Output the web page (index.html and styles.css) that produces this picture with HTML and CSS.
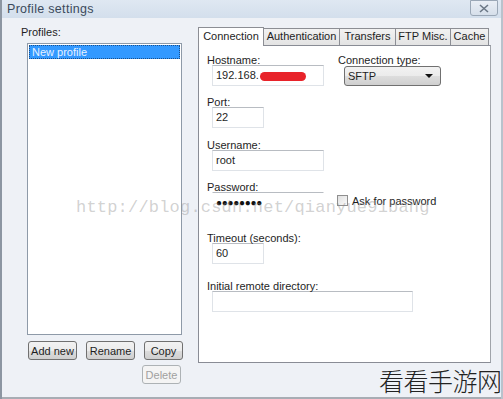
FILE: index.html
```html
<!DOCTYPE html>
<html>
<head>
<meta charset="utf-8">
<link rel="stylesheet" href="styles.css">
</head>
<body>
<div class="window">
  <div class="titlebar">
    <span class="title">Profile settings</span>
    <span class="close">
      <svg width="12" height="9" viewBox="0 0 12 9"><path d="M2 1 L10 8 M10 1 L2 8" stroke="#6b7785" stroke-width="1.6" fill="none"/></svg>
    </span>
  </div>
  <div class="main">
    <div class="left">
      <div class="lbl profiles-lbl">Profiles:</div>
      <div class="listbox">
        <div class="item selected">New profile</div>
      </div>
      <div class="btnrow">
        <button class="btn w48">Add new</button>
        <button class="btn w48">Rename</button>
        <button class="btn w38">Copy</button>
      </div>
      <div class="btnrow right">
        <button class="btn w38 disabled">Delete</button>
      </div>
    </div>
    <div class="tabs">
      <div class="tabstrip">
        <div class="tab active">Connection</div>
        <div class="tab">Authentication</div>
        <div class="tab">Transfers</div>
        <div class="tab">FTP Misc.</div>
        <div class="tab">Cache</div>
      </div>
      <div class="panel">
        <div class="row">
          <div class="group g-host">
            <div class="lbl">Hostname:</div>
            <div class="input w111">192.168.<span class="redact"></span></div>
          </div>
          <div class="group g-type">
            <div class="lbl">Connection type:</div>
            <div class="select">SFTP<span class="arrow"></span></div>
          </div>
        </div>
        <div class="group g-port">
          <div class="lbl">Port:</div>
          <div class="input w51">22</div>
        </div>
        <div class="group g-user">
          <div class="lbl">Username:</div>
          <div class="input w111">root</div>
        </div>
        <div class="row">
          <div class="group g-pass">
            <div class="lbl">Password:</div>
            <div class="input w111 pw">&#9679;&#9679;&#9679;&#9679;&#9679;&#9679;&#9679;&#9679;</div>
          </div>
          <label class="check"><span class="box"></span>Ask for password</label>
        </div>
        <div class="group g-timeout">
          <div class="lbl">Timeout (seconds):</div>
          <div class="input w51">60</div>
        </div>
        <div class="group g-dir">
          <div class="lbl">Initial remote directory:</div>
          <div class="input w200"></div>
        </div>
      </div>
    </div>
  </div>
  <div class="footer"></div>
  <div class="wm-url">http://blog.csdn.net/qianyue91bang</div>
  <div class="wm-cn">看看手游网</div>
</div>
</body>
</html>
```
FILE: styles.css
```css
* { box-sizing: border-box; }
html, body { margin: 0; padding: 0; }
body {
  width: 503px; height: 399px; overflow: hidden;
  font-family: "Liberation Sans", Arial, sans-serif;
  font-size: 11px; color: #1e1e1e;
  background: #ffffff;
}
.window {
  position: relative;
  width: 503px; height: 399px;
  background: #eef1f6;
  border-left: 2px solid #8c96a2;
  border-right: 2px solid #b9c2cc;
  display: flex; flex-direction: column;
}
.titlebar {
  height: 18px; flex: none;
  display: flex; align-items: center; justify-content: space-between;
  background: linear-gradient(#dfe8f2, #d3dfec);
  padding-left: 5px;
}
.title { font-size: 12.5px; color: #3b4a5c; letter-spacing: 0.3px; }
.close {
  width: 28px; height: 16px; margin-right: 3px; margin-top: -2px;
  border: 1px solid #9aa7b6; border-radius: 0 0 3px 3px;
  background: linear-gradient(#e9eef5, #d6dfea);
  display: flex; align-items: center; justify-content: center;
}
.main { display: flex; flex: none; height: 345px; }
.left { width: 196px; padding-left: 19px; padding-top: 8px; flex: none; }
.lbl { height: 11px; line-height: 12px; white-space: nowrap; }
.profiles-lbl { margin-bottom: 6px; }
.listbox {
  margin-left: 6px; width: 155px; height: 292px;
  background: #fff; border: 1px solid #8e9aa8;
  padding: 1px;
}
.item { height: 14px; line-height: 14px; padding-left: 2px; }
.item.selected { background: #3399ff; color: #e8f2ff; border: 1px dotted #1a4f8a; line-height: 12px; }
.btnrow { display: flex; gap: 9px; margin-left: 7px; margin-top: 6px; }
.btnrow.right { justify-content: flex-end; width: 153px; margin-top: 5px; }
.btn {
  height: 19px; padding: 0; white-space: nowrap;
  font-family: inherit; font-size: 11px; color: #1e1e1e;
  border: 1px solid #707070; border-radius: 3px;
  background: linear-gradient(#f2f2f2 0%, #ebebeb 50%, #dddddd 51%, #cfcfcf 100%);
}
.btn.disabled { color: #a0a0a0; border-color: #adb2b5; background: #f4f4f4; }
.w48 { width: 49px; }
.w38 { width: 39px; }
.tabs { width: 293px; padding-top: 9px; flex: none; display: flex; flex-direction: column; }
.tabstrip { display: flex; align-items: flex-end; height: 18px; padding-left: 1px; }
.tab {
  height: 17px; line-height: 15px; padding: 0; text-align: center;
  border: 1px solid #8c8e94; border-bottom: none; margin-right: -1px;
  background: linear-gradient(#f2f2f2, #e3e3e3);
  white-space: nowrap;
}
.tab:nth-child(2) { width: 77px; }
.tab:nth-child(3) { width: 57px; }
.tab:nth-child(4) { width: 56px; }
.tab:nth-child(5) { width: 39px; }
.tab.active {
  height: 19px; width: 66px; background: #fff; margin-bottom: -1px; position: relative; z-index: 1;
  margin-left: -1px; line-height: 17px;
}
.panel {
  height: 318px; background: #fff;
  border: 1px solid #898c95; border-right-color: #a0a4aa;
  padding: 8px 0 0 8px;
}
.row { display: flex; }
.input {
  height: 21px; margin-left: 5px;
  border: 1px solid #dfe3e8; border-top-color: #b8bcc2;
  line-height: 19px; padding-left: 3px; background: #fff;
  white-space: nowrap;
}
.w111 { width: 112px; }
.w51 { width: 52px; }
.w200 { width: 201px; }
.g-type { margin-left: 14px; }
.g-port { margin-top: 10px; }
.g-user { margin-top: 11px; }
.g-pass { margin-top: 10px; }
.g-timeout { margin-top: 19px; }
.g-dir { margin-top: 16px; }
.redact {
  display: inline-block; width: 46px; height: 9px; vertical-align: middle;
  background: #e8232a; border-radius: 5px; margin-left: 1px;
}
.pw { font-size: 10px; letter-spacing: -0.3px; color: #111; border-left-color: #fff; border-right-color: #fff; border-bottom-color: #fff; }
.select {
  position: relative;
  margin-left: 6px; margin-top: 1px; width: 97px; height: 20px;
  border: 1px solid #707070; border-radius: 3px;
  background: linear-gradient(#f2f2f2 0%, #ebebeb 50%, #dddddd 51%, #cfcfcf 100%);
  line-height: 18px; padding-left: 3px;
}
.arrow {
  position: absolute; right: 7px; top: 7px;
  width: 0; height: 0;
  border-left: 4px solid transparent; border-right: 4px solid transparent;
  border-top: 4px solid #111;
}
.check { display: flex; align-items: center; margin-left: 13px; margin-top: 23px; height: 13px; white-space: nowrap; }
.box {
  width: 11px; height: 11px; margin-right: 4px;
  border: 1px solid #8f8f8f; background: linear-gradient(135deg, #e0e0e0, #fafafa);
}
.footer { flex: 1; border-bottom: 2px solid #a8adb4; }
.wm-url {
  position: absolute; left: 74px; top: 198px;
  font-family: "Liberation Mono", monospace; font-size: 17px; letter-spacing: 0.2px;
  color: rgba(140, 140, 140, 0.4);
  white-space: nowrap;
}
.wm-cn {
  position: absolute; left: 377px; top: 366px;
  font-family: "Noto Sans CJK SC", sans-serif; font-weight: 300; font-size: 25px; line-height: 28px;
  color: #222; letter-spacing: -0.5px;
  white-space: nowrap;
}
```
